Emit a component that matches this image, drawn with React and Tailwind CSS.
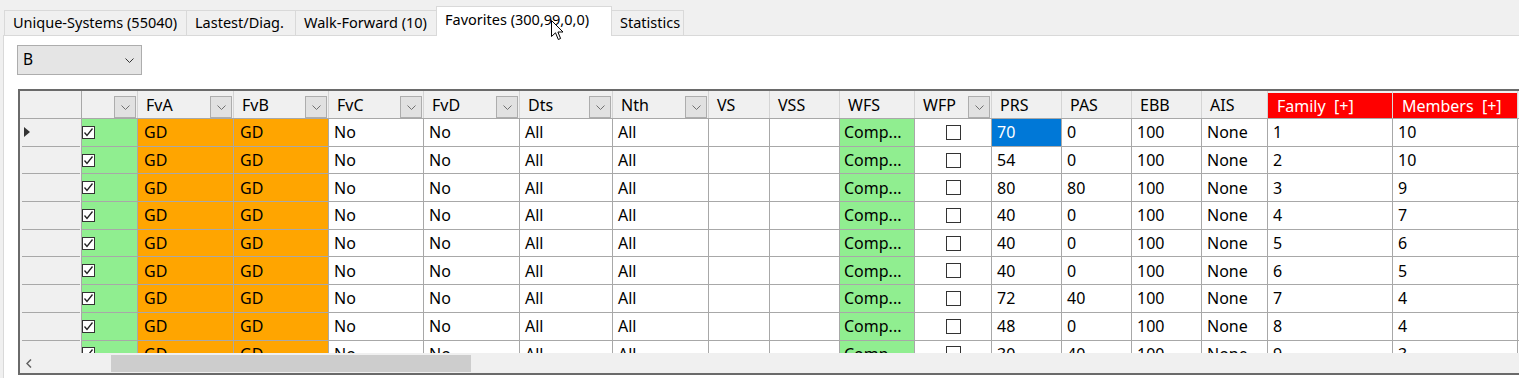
import React from "react";

const cols = [
  { label: "", w: "w-[56px]", dd: true },
  { label: "FvA", w: "w-[96px]", dd: true },
  { label: "FvB", w: "w-[95px]", dd: true },
  { label: "FvC", w: "w-[95px]", dd: true },
  { label: "FvD", w: "w-[96px]", dd: true },
  { label: "Dts", w: "w-[93px]", dd: true },
  { label: "Nth", w: "w-[96px]", dd: true },
  { label: "VS", w: "w-[61px]" },
  { label: "VSS", w: "w-[70px]" },
  { label: "WFS", w: "w-[75px]" },
  { label: "WFP", w: "w-[77px]", dd: true },
  { label: "PRS", w: "w-[70px]" },
  { label: "PAS", w: "w-[70px]" },
  { label: "EBB", w: "w-[70px]" },
  { label: "AIS", w: "w-[66px]" },
  { label: "Family\u00a0\u00a0[+]", w: "w-[125px]", red: true },
  { label: "Members\u00a0\u00a0[+]", w: "w-[125px]", red: true },
];

const rows = [
  ["70", "0", "1", "10"],
  ["54", "0", "2", "10"],
  ["80", "80", "3", "9"],
  ["40", "0", "4", "7"],
  ["40", "0", "5", "6"],
  ["40", "0", "6", "5"],
  ["72", "40", "7", "4"],
  ["48", "0", "8", "4"],
  ["30", "40", "9", "3"],
];

function Chevron({ className = "" }) {
  return (
    <svg width="9" height="5" viewBox="0 0 9 5" className={className}>
      <polyline points="0.5,0.5 4.5,4.5 8.5,0.5" fill="none" stroke="currentColor" strokeWidth="1" />
    </svg>
  );
}

function HeaderDD() {
  return (
    <div className="self-end ml-auto mr-px w-[22px] h-[22px] shrink-0 bg-[#e1e1e1] border border-[#adadad] flex items-center justify-center text-[#707070]">
      <Chevron />
    </div>
  );
}

function CheckedBox() {
  return (
    <div className="w-[13px] h-[13px] border border-[#333] bg-white flex items-center justify-center">
      <svg width="11" height="11" viewBox="0 0 11 11">
        <polyline points="1.5,5.5 4,8.5 9.5,1.5" fill="none" stroke="#222" strokeWidth="1.3" />
      </svg>
    </div>
  );
}

function Cell({ w, className = "", children }) {
  return (
    <div className={`${w} shrink-0 h-full border-r border-[#a8a8a8] flex items-center overflow-hidden whitespace-nowrap ${className}`}>
      {children}
    </div>
  );
}

const tabs = [
  { label: "Unique-Systems (55040)", w: "w-[183px]" },
  { label: "Lastest/Diag.", w: "w-[110px]" },
  { label: "Walk-Forward (10)", w: "w-[142px]" },
  { label: "Favorites (300,99,0,0)", w: "w-[176px]", sel: true },
  { label: "Statistics", w: "w-[73px]" },
];

export default function App() {
  return (
    <div className="relative w-[1519px] h-[378px] overflow-hidden bg-[#f0f0f0] text-black font-['Noto_Sans',sans-serif]">
      {/* Tabs */}
      <div className="flex items-end h-[35px] pl-[5px]">
        {tabs.map((t) =>
          t.sel ? (
            <div
              key={t.label}
              className={`${t.w} -ml-px relative z-10 h-[30px] -mb-px bg-white border-l border-r border-t border-[#d9d9d9] flex items-center pl-[8px] pb-[3px] text-[14.5px] whitespace-nowrap`}
            >
              {t.label}
            </div>
          ) : (
            <div
              key={t.label}
              className={`${t.w} -ml-px h-[25px] bg-[#f0f0f0] border border-b-0 border-[#d9d9d9] flex items-center pl-[8px] text-[14.5px] whitespace-nowrap`}
            >
              {t.label}
            </div>
          )
        )}
      </div>

      {/* Panel */}
      <div className="ml-[3px] h-[343px] bg-white border-l border-t border-[#d9d9d9] flex flex-col items-start">
        {/* Combo */}
        <div className="mt-[9px] ml-[13px] w-[125px] h-[30px] bg-[#e5e5e5] border border-[#adadad] flex items-center pl-[5px] pr-[7px] text-[15.5px]">
          <span>B</span>
          <Chevron className="ml-auto text-[#333]" />
        </div>

        {/* Grid */}
        <div className="mt-[14px] ml-[14px] w-[1540px] shrink-0 border-2 border-[#6a6a6a] flex flex-col text-[16px]">
          {/* Header */}
          <div className="flex h-[28px] bg-[#f0f0f0] border-b border-[#a8a8a8]">
            <div className="w-[62px] shrink-0 h-full border-r border-[#a8a8a8]" />
            {cols.map((c, i) =>
              c.red ? (
                <div
                  key={i}
                  className={`${c.w} shrink-0 h-full pt-[2px] border-r border-[#d8d8d8]`}
                >
                  <div className="h-full bg-[#ff0000] text-white flex items-center pl-[9px] whitespace-nowrap">
                    {c.label}
                  </div>
                </div>
              ) : (
                <div
                  key={i}
                  className={`${c.w} shrink-0 h-full border-r border-[#d4d4d4] flex items-center pl-[8px] whitespace-nowrap`}
                >
                  <span>{c.label}</span>
                  {c.dd && <HeaderDD />}
                </div>
              )
            )}
            <div className="flex-1" />
          </div>

          {/* Body */}
          <div className="h-[234px] overflow-hidden flex flex-col bg-white">
            {rows.map((r, ri) => (
              <div key={ri} className="flex h-[27.7px] shrink-0">
                <div className="w-[62px] shrink-0 h-full bg-[#f0f0f0] border-r border-[#a8a8a8] flex flex-col">
                  <div className="flex-1 flex items-center pl-[4px]">
                    {ri === 0 && (
                      <svg width="6" height="10" viewBox="0 0 6 10">
                        <polygon points="0,0 6,5 0,10" fill="#333" />
                      </svg>
                    )}
                  </div>
                  <div className="h-px ml-[2px] mr-px bg-[#a8a8a8]" />
                </div>
                <div className="flex flex-1 h-full border-b border-[#a8a8a8]">
                  <Cell w="w-[56px]" className="bg-[#90ee90]">
                    <CheckedBox />
                  </Cell>
                  <Cell w="w-[96px]" className="bg-[#ffa500] pl-[6px]">GD</Cell>
                  <Cell w="w-[95px]" className="bg-[#ffa500] pl-[6px]">GD</Cell>
                  <Cell w="w-[95px]" className="pl-[5px]">No</Cell>
                  <Cell w="w-[96px]" className="pl-[5px]">No</Cell>
                  <Cell w="w-[93px]" className="pl-[5px]">All</Cell>
                  <Cell w="w-[96px]" className="pl-[5px]">All</Cell>
                  <Cell w="w-[61px]" />
                  <Cell w="w-[70px]" />
                  <Cell w="w-[75px]" className="bg-[#90ee90] pl-[4px]">Comp...</Cell>
                  <Cell w="w-[77px]" className="justify-center">
                    <div className="w-[15px] h-[15px] border border-[#333] bg-white" />
                  </Cell>
                  <Cell
                    w="w-[70px]"
                    className={ri === 0 ? "bg-[#0078d7] text-white pl-[5px]" : "pl-[5px]"}
                  >
                    {r[0]}
                  </Cell>
                  <Cell w="w-[70px]" className="pl-[5px]">{r[1]}</Cell>
                  <Cell w="w-[70px]" className="pl-[5px]">100</Cell>
                  <Cell w="w-[66px]" className="pl-[5px]">None</Cell>
                  <Cell w="w-[125px]" className="pl-[5px]">{r[2]}</Cell>
                  <Cell w="w-[125px]" className="pl-[5px]">{r[3]}</Cell>
                  <div className="flex-1" />
                </div>
              </div>
            ))}
          </div>

          {/* Horizontal scrollbar */}
          <div className="h-[20px] bg-[#f0f0f0] flex items-center">
            <div className="w-[17px] h-full flex items-center justify-center text-[#606060]">
              <svg width="6" height="9" viewBox="0 0 6 9">
                <polyline points="5,0.5 1,4.5 5,8.5" fill="none" stroke="currentColor" strokeWidth="1.5" />
              </svg>
            </div>
            <div className="ml-[74px] w-[360px] h-[17px] bg-[#cdcdcd]" />
          </div>
        </div>
      </div>

      {/* Mouse cursor */}
      <svg
        className="absolute left-[551px] top-[20px] z-20"
        width="13"
        height="21"
        viewBox="0 0 13 21"
      >
        <path
          d="M0.5 0.5 L0.5 16.5 L4.5 12.8 L7.3 19.5 L9.6 18.5 L6.9 12 L12 12 Z"
          fill="white"
          stroke="black"
          strokeWidth="1"
          strokeLinejoin="miter"
        />
      </svg>
    </div>
  );
}
